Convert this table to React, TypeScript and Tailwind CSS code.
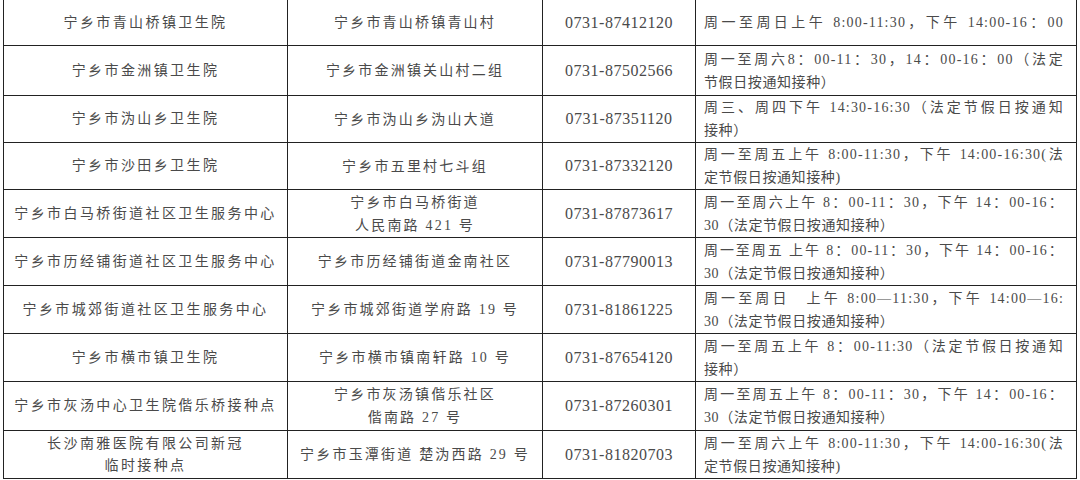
import React from 'react';

type Row = {
  name: string[];
  addr: string[];
  phone: string;
  hours: string[];
};

const rows: Row[] = [
  {
    name: ['宁乡市青山桥镇卫生院'],
    addr: ['宁乡市青山桥镇青山村'],
    phone: '0731-87412120',
    hours: ['周一至周日上午 8:00-11:30，下午 14:00-16：00'],
  },
  {
    name: ['宁乡市金洲镇卫生院'],
    addr: ['宁乡市金洲镇关山村二组'],
    phone: '0731-87502566',
    hours: ['周一至周六8：00-11：30，14：00-16：00（法定', '节假日按通知接种）'],
  },
  {
    name: ['宁乡市沩山乡卫生院'],
    addr: ['宁乡市沩山乡沩山大道'],
    phone: '0731-87351120',
    hours: ['周三、周四下午 14:30-16:30（法定节假日按通知', '接种）'],
  },
  {
    name: ['宁乡市沙田乡卫生院'],
    addr: ['宁乡市五里村七斗组'],
    phone: '0731-87332120',
    hours: ['周一至周五上午 8:00-11:30，下午 14:00-16:30(法', '定节假日按通知接种)'],
  },
  {
    name: ['宁乡市白马桥街道社区卫生服务中心'],
    addr: ['宁乡市白马桥街道', '人民南路 421 号'],
    phone: '0731-87873617',
    hours: ['周一至周六上午 8：00-11：30，下午 14：00-16：', '30（法定节假日按通知接种）'],
  },
  {
    name: ['宁乡市历经铺街道社区卫生服务中心'],
    addr: ['宁乡市历经铺街道金南社区'],
    phone: '0731-87790013',
    hours: ['周一至周五 上午 8：00-11：30，下午 14：00-16：', '30（法定节假日按通知接种）'],
  },
  {
    name: ['宁乡市城郊街道社区卫生服务中心'],
    addr: ['宁乡市城郊街道学府路 19 号'],
    phone: '0731-81861225',
    hours: ['周一至周日　上午 8:00—11:30，下午 14:00—16:', '30（法定节假日按通知接种）'],
  },
  {
    name: ['宁乡市横市镇卫生院'],
    addr: ['宁乡市横市镇南轩路 10 号'],
    phone: '0731-87654120',
    hours: ['周一至周五上午 8：00-11:30（法定节假日按通知', '接种）'],
  },
  {
    name: ['宁乡市灰汤中心卫生院偕乐桥接种点'],
    addr: ['宁乡市灰汤镇偕乐社区', '偕南路 27 号'],
    phone: '0731-87260301',
    hours: ['周一至周五上午 8：00-11：30，下午 14：00-16：', '30（法定节假日按通知接种）'],
  },
  {
    name: ['长沙南雅医院有限公司新冠', '临时接种点'],
    addr: ['宁乡市玉潭街道 楚沩西路 29 号'],
    phone: '0731-81820703',
    hours: ['周一至周六上午 8:00-11:30，下午 14:00-16:30(法', '定节假日按通知接种)'],
  },
];

const cell = 'border-r border-b border-[#222] flex flex-col justify-center overflow-hidden';

export default function App() {
  return (
    <div className="w-[1080px] h-[480px] bg-white overflow-hidden">
      <div
        className="ml-[3px] w-[1074px] border-l border-[#222] grid grid-cols-[284px_255px_153px_381px] grid-rows-[46px_50px_47px_47px_48px_48px_48px_48px_49px_48px] text-[#4a4a4a]"
        style={{ fontFamily: "'Liberation Serif', 'Noto Sans CJK SC', serif" }}
      >
        {rows.map((r, i) => (
          <React.Fragment key={i}>
            <div className={`${cell} items-center text-[14px] leading-[22px] tracking-[2.4px]`}>
              {r.name.map((t, j) => (
                <span key={j} className="whitespace-nowrap">{t}</span>
              ))}
            </div>
            <div className={`${cell} items-center text-[14px] leading-[23px] tracking-[2.2px]`}>
              {r.addr.map((t, j) => (
                <span key={j} className="whitespace-nowrap">{t}</span>
              ))}
            </div>
            <div className={`${cell} items-center text-[16px] tracking-[0.5px]`}>
              <span className="whitespace-nowrap">{r.phone}</span>
            </div>
            <div className={`${cell} items-start pl-[8px] text-[14px] leading-[23px] tracking-[0.6px]`}>
              {r.hours.map((t, j) =>
                j === 0 ? (
                  <span
                    key={j}
                    className="block w-[360px] whitespace-nowrap tracking-[1.2px] text-justify [text-align-last:justify] [text-justify:inter-character]"
                  >
                    {t}
                  </span>
                ) : (
                  <span key={j} className="whitespace-nowrap">{t}</span>
                )
              )}
            </div>
          </React.Fragment>
        ))}
      </div>
    </div>
  );
}
